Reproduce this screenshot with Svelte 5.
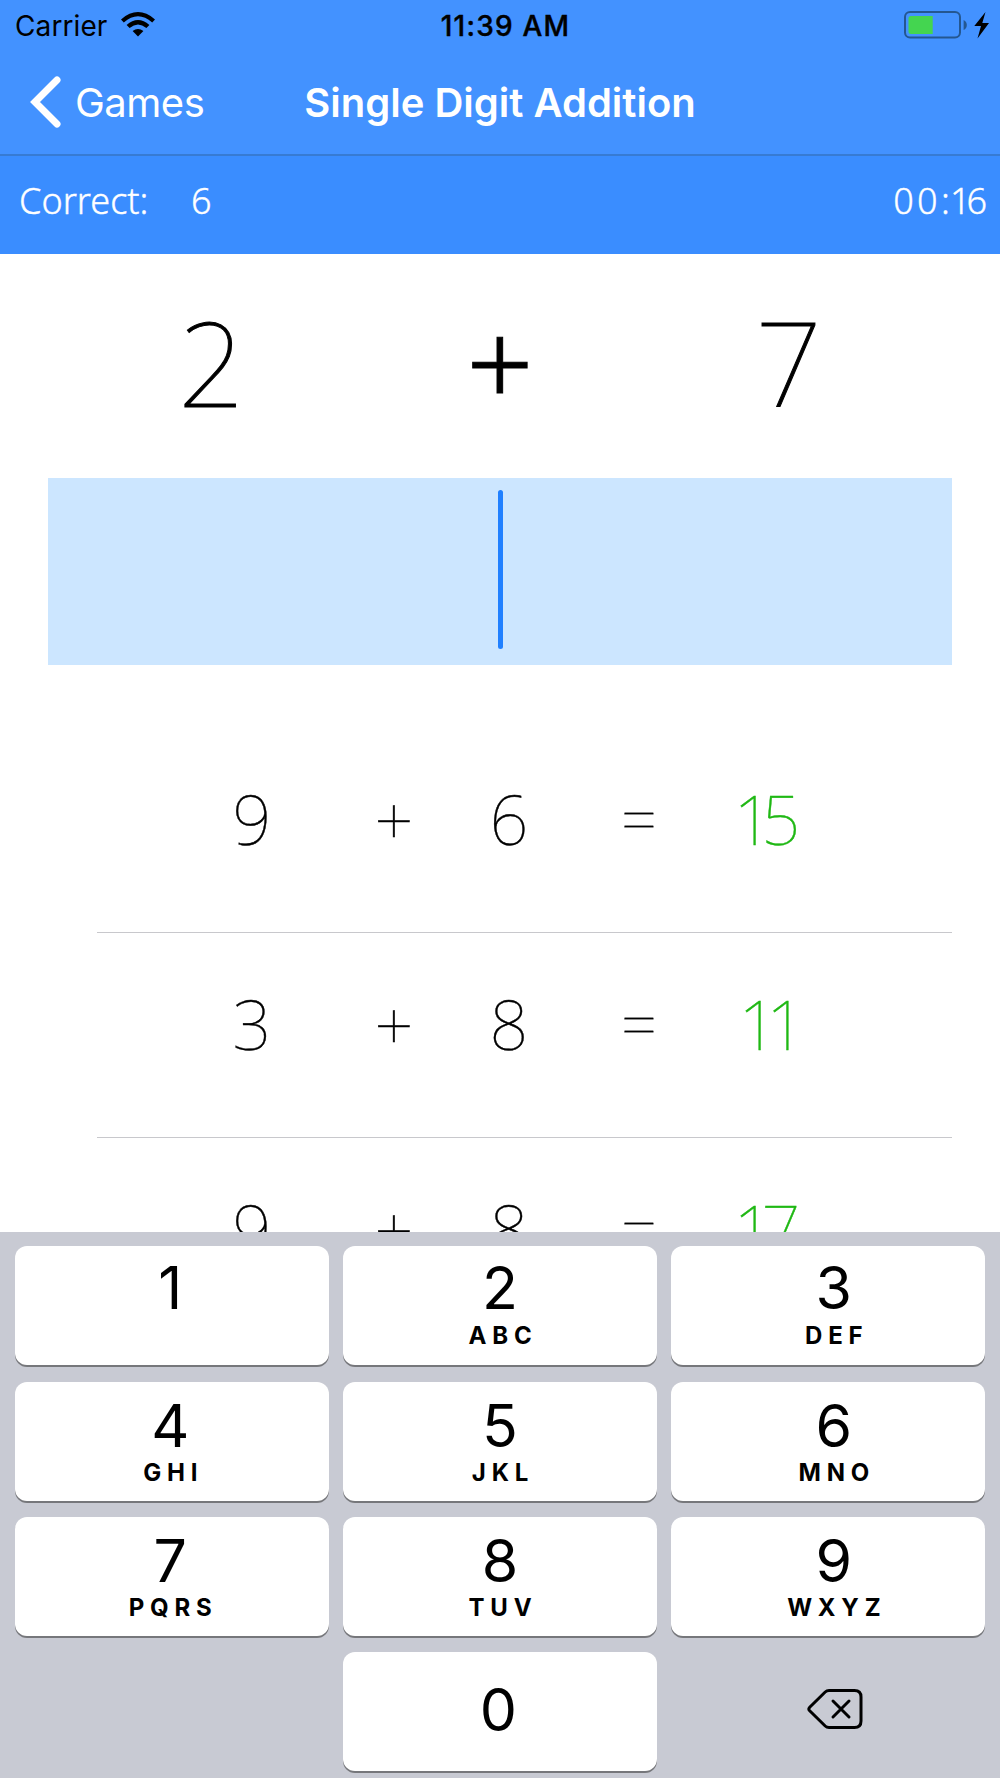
<script lang="ts">
	const question = { left: 2, right: 7 };
	const correct = 6;
	const minutes = '00';
	const seconds = '16';

	const history = [
		{ left: 9, right: 6, answer: 15 },
		{ left: 3, right: 8, answer: 11 },
		{ left: 9, right: 8, answer: 17 }
	];

	const keys = [
		{ digit: '1', letters: '' },
		{ digit: '2', letters: 'ABC' },
		{ digit: '3', letters: 'DEF' },
		{ digit: '4', letters: 'GHI' },
		{ digit: '5', letters: 'JKL' },
		{ digit: '6', letters: 'MNO' },
		{ digit: '7', letters: 'PQRS' },
		{ digit: '8', letters: 'TUV' },
		{ digit: '9', letters: 'WXYZ' }
	];
</script>

<div class="screen">
	<header>
		<div class="status">
			<div class="carrier">
				<span>Carrier</span>
				<svg width="34" height="25" viewBox="0 0 34 25">
					<path d="M0 7.4 Q17-7.2 34 7.4 L31.2 10.4 Q17-2 2.8 10.4Z" />
					<path d="M5.6 13 Q17 3.2 28.4 13 L25.4 16 Q17 9 8.6 16Z" />
					<path d="M11.6 19 Q17 14.8 22.4 19 L17 24.6Z" />
				</svg>
			</div>
			<span class="clock">11:39 AM</span>
			<svg class="battery" width="86" height="28" viewBox="0 0 86 28">
				<rect x="1" y="1" width="55" height="25.4" rx="5" fill="none" stroke="#245791" stroke-width="2" />
				<path d="M4.5 7.5a2.5 2.5 0 0 1 2.5-2.5h21.7v18H7a2.5 2.5 0 0 1-2.5-2.5z" fill="#44d550" />
				<path d="M59.6 9q3.2 1.5 3.2 5t-3.2 5z" fill="#245791" />
				<path d="M81.5 1 70.3 15h6.7L73.5 27.5 85 12h-6.7z" />
			</svg>
		</div>
		<nav>
			<button class="back">
				<svg width="31" height="52" viewBox="0 0 31 52">
					<path d="M27 4 5 26 27 48" />
				</svg>
				<span>Games</span>
			</button>
			<h1>Single Digit Addition</h1>
		</nav>
	</header>

	<section class="score">
		<span class="label">Correct:</span>
		<span>{correct}</span>
		<span class="time"><span class="minutes">{minutes}</span>:<span class="seconds">{seconds}</span></span>
	</section>

	<main>
		<div class="question">
			<span>{question.left}</span>
			<span class="operator">+</span>
			<span>{question.right}</span>
		</div>

		<div class="answer">
			<div class="caret"></div>
		</div>

		<ul class="history">
			{#each history as item}
				<li>
					<span>{item.left}</span>
					<span>+</span>
					<span>{item.right}</span>
					<span class="equals">=</span>
					<span class="right" class:ones={item.answer === 11}>{item.answer}</span>
				</li>
			{/each}
		</ul>
	</main>

	<div class="keyboard">
		{#each keys as key}
			<button class="key">
				<span class="digit">{key.digit}</span>
				<span class="letters">{key.letters}</span>
			</button>
		{/each}
		<div></div>
		<button class="key zero"><span class="digit">0</span></button>
		<button class="delete" aria-label="Delete">
			<svg width="56" height="42" viewBox="0 0 56 42">
				<path d="M22 2.5H47.5Q54 2.5 54 9V33Q54 39.5 47.5 39.5H22Q19.8 39.5 18.2 38L2.7 22.8Q1 21 2.7 19.2L18.2 4Q19.8 2.5 22 2.5Z" />
				<path d="M26 13 42 29M42 13 26 29" />
			</svg>
		</button>
	</div>
</div>

<style>
	:global(body) {
		margin: 0;
	}

	* {
		box-sizing: border-box;
	}

	button {
		padding: 0;
		border: none;
		background: none;
		font: inherit;
		color: inherit;
	}

	.screen {
		display: flex;
		flex-direction: column;
		width: 1000px;
		height: 1778px;
		overflow: hidden;
		background: #fff;
		color: #000;
		font-family: Inter, 'Liberation Sans', sans-serif;
	}

	/* Status bar and title */
	header {
		height: 156px;
		background: #4392ff;
		border-bottom: 2px solid #377bd3;
	}

	.status {
		display: grid;
		grid-template-columns: 1fr auto 1fr;
		align-items: center;
		height: 50px;
		padding: 0 10px 0 15px;
		font-size: 28px;
	}

	.carrier {
		display: flex;
		align-items: center;
		gap: 14px;
		padding-top: 1px;
		letter-spacing: 0.1px;
	}

	.carrier svg {
		margin-bottom: 2px;
	}

	.clock {
		padding: 1px 0 0 6px;
		font-weight: 500;
		letter-spacing: 1.2px;
		-webkit-text-stroke: 0.4px #000;
	}

	.battery {
		justify-self: end;
		margin-bottom: 1px;
	}

	nav {
		display: grid;
		grid-template-columns: 1fr auto 1fr;
		align-items: center;
		height: 104px;
		color: #fff;
	}

	.back {
		display: flex;
		align-items: center;
		gap: 14px;
		padding-left: 30px;
		font-size: 40px;
		letter-spacing: -0.5px;
	}

	.back path {
		fill: none;
		stroke: #fff;
		stroke-width: 7;
		stroke-linecap: round;
	}

	h1 {
		margin: 0;
		font-size: 40px;
		font-weight: 600;
	}

	.score {
		display: flex;
		align-items: center;
		height: 98px;
		padding: 0 13px 10px 19px;
		background: #3a8dff;
		color: #fff;
		font-family: 'Noto Sans', sans-serif;
		font-size: 36px;
		font-weight: 300;
		-webkit-text-stroke: 0.4px #fff;
	}

	.label {
		width: 172px;
	}

	.time {
		margin-left: auto;
	}

	.minutes {
		letter-spacing: 3.4px;
	}

	.seconds {
		margin-right: 4px;
		letter-spacing: -4px;
	}

	/* Current question */
	main {
		height: 978px;
		overflow: hidden;
		font-family: 'Noto Sans', sans-serif;
		font-weight: 100;
	}

	.question {
		display: grid;
		grid-template-columns: repeat(3, 1fr);
		height: 224px;
		padding: 0 67px;
		line-height: 215px;
		text-align: center;
		font-size: 117px;
		-webkit-text-stroke: 1px #000;
	}

	.operator {
		font-weight: 300;
	}

	.answer {
		display: flex;
		justify-content: center;
		align-items: center;
		height: 187px;
		margin: 0 48px;
		background: #cce6ff;
	}

	.caret {
		width: 5px;
		height: 159px;
		margin-bottom: 5px;
		border-radius: 3px;
		background: #2080ff;
	}

	/* Answered questions */
	.history {
		margin: 63px 0 0;
		padding: 0;
		list-style: none;
	}

	.history li {
		display: grid;
		grid-template-columns: 142px 142px 88px 172px 86px;
		height: 205px;
		margin: 0 48px 0 97px;
		padding-left: 84px;
		border-bottom: 1px solid #c8c8cc;
		line-height: 181px;
		text-align: center;
		font-size: 68px;
		-webkit-text-stroke: 0.4px;
	}

	.equals {
		font-size: 62px;
	}

	.right {
		margin-left: -13px;
		color: #1fb814;
		letter-spacing: -11px;
	}

	.ones {
		padding-left: 10px;
	}

	/* Number pad */
	.keyboard {
		display: grid;
		grid-template-columns: repeat(3, 314px);
		grid-auto-rows: 119px;
		gap: 16.3px 14.3px;
		flex: 1;
		padding: 14.4px 14.7px 0;
		background: #c8cad3;
	}

	.key {
		display: flex;
		flex-direction: column;
		align-items: center;
		padding-top: 14px;
		border-radius: 12px;
		background: #fff;
		box-shadow: 0 2px 0 #76777b;
	}

	.key:nth-child(-n + 3) {
		padding-top: 12px;
	}

	.key:nth-child(3n + 1) {
		padding-right: 3px;
	}

	.key:nth-child(3n) {
		padding-left: 11px;
	}

	.digit {
		font-size: 59px;
		line-height: 59px;
	}

	.letters {
		margin-top: 4px;
		padding-left: 6px;
		font-size: 24px;
		font-weight: 700;
		line-height: 28px;
		letter-spacing: 5.8px;
	}

	.key:nth-child(-n + 3) .letters {
		margin-top: 5px;
	}

	.key.zero {
		justify-content: center;
		padding: 0 3px 5px 0;
	}

	.delete {
		display: flex;
		justify-content: center;
		align-items: center;
		padding: 0 0 6px 13px;
	}

	.delete path {
		fill: none;
		stroke: #000;
		stroke-width: 3;
		stroke-linecap: round;
	}
</style>
